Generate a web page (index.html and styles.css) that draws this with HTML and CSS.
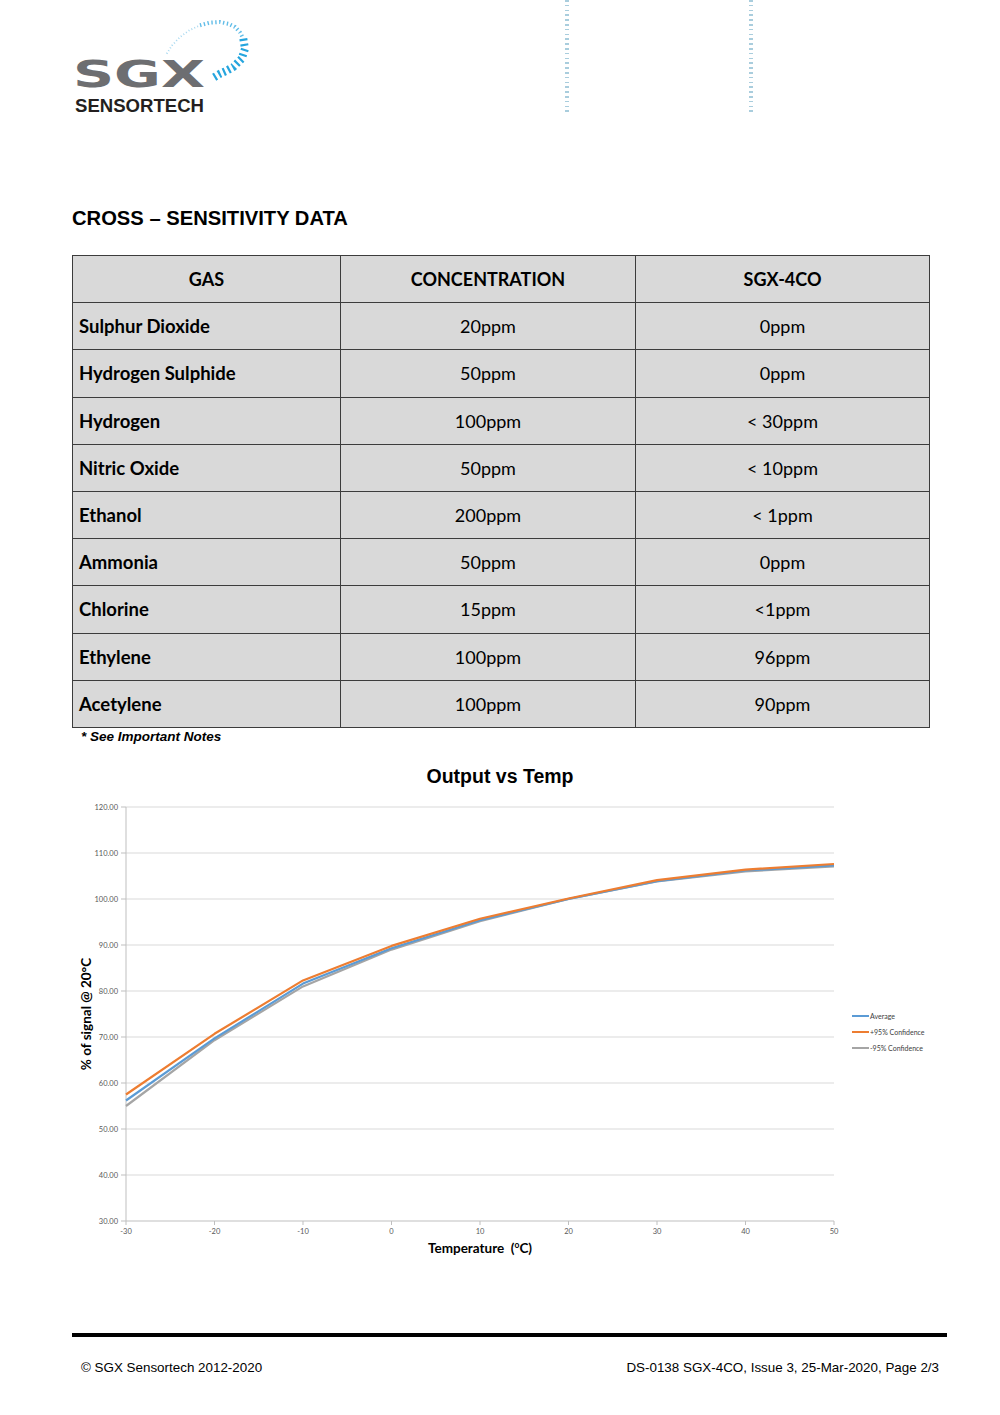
FILE: index.html
```html
<!DOCTYPE html>
<html lang="en">
<head>
<meta charset="utf-8">
<title>SGX-4CO Cross-Sensitivity Data</title>
<link rel="stylesheet" href="styles.css">
</head>
<body>
<div class="page">
  <header class="top">
    <div class="logo">
      <svg class="logo-svg" width="180" height="112" viewBox="72 0 180 112" aria-label="SGX Sensortech">
        <polyline class="arc arc-a" points="166.7,53.7 172,45.5 180,37 189.5,30.2 200,25.3"/>
        <polyline class="arc arc-b" points="200,25.3 210,22.6 220,22 228.5,23.8 235,27 240,32.3 243.3,38.7"/>
        <polyline class="arc arc-c" points="243.3,38.7 245,48.7 241.7,58.7 233.3,67 226,71 220,73.7 211.7,78.7"/>
        <text class="logo-sgx" x="73" y="87" textLength="132" lengthAdjust="spacingAndGlyphs">SGX</text>
        <text class="logo-sub" x="75" y="112" textLength="129" lengthAdjust="spacingAndGlyphs">SENSORTECH</text>
      </svg>
    </div>
    <div class="dots dots-1"></div>
    <div class="dots dots-2"></div>
  </header>

  <main class="content">
    <h1 class="section-title">CROSS – SENSITIVITY DATA</h1>

    <table class="xs-table">
      <colgroup>
        <col class="c1"><col class="c2"><col class="c3">
      </colgroup>
      <thead>
        <tr><th>GAS</th><th>CONCENTRATION</th><th>SGX-4CO</th></tr>
      </thead>
      <tbody>
        <tr><td class="gas">Sulphur Dioxide</td><td>20ppm</td><td>0ppm</td></tr>
        <tr><td class="gas">Hydrogen Sulphide</td><td>50ppm</td><td>0ppm</td></tr>
        <tr><td class="gas">Hydrogen</td><td>100ppm</td><td>&lt; 30ppm</td></tr>
        <tr><td class="gas">Nitric Oxide</td><td>50ppm</td><td>&lt; 10ppm</td></tr>
        <tr><td class="gas">Ethanol</td><td>200ppm</td><td>&lt; 1ppm</td></tr>
        <tr><td class="gas">Ammonia</td><td>50ppm</td><td>0ppm</td></tr>
        <tr><td class="gas">Chlorine</td><td>15ppm</td><td>&lt;1ppm</td></tr>
        <tr><td class="gas">Ethylene</td><td>100ppm</td><td>96ppm</td></tr>
        <tr><td class="gas">Acetylene</td><td>100ppm</td><td>90ppm</td></tr>
      </tbody>
    </table>
    <p class="note">* See Important Notes</p>

    <section class="chart">
      <h2 class="chart-title">Output vs Temp</h2>
      <svg class="chart-svg" width="880" height="470" viewBox="72 790 880 470">
        <g class="grid">
          <line x1="126" y1="806" x2="834" y2="806"/>
          <line x1="126" y1="852" x2="834" y2="852"/>
          <line x1="126" y1="898" x2="834" y2="898"/>
          <line x1="126" y1="944" x2="834" y2="944"/>
          <line x1="126" y1="990" x2="834" y2="990"/>
          <line x1="126" y1="1036" x2="834" y2="1036"/>
          <line x1="126" y1="1082" x2="834" y2="1082"/>
          <line x1="126" y1="1128" x2="834" y2="1128"/>
          <line x1="126" y1="1174" x2="834" y2="1174"/>
        </g>
        <g class="axis">
          <line x1="126" y1="806" x2="126" y2="1220"/>
          <line x1="121" y1="1220" x2="834" y2="1220"/>
          <line x1="121" y1="806" x2="126" y2="806"/>
          <line x1="121" y1="852" x2="126" y2="852"/>
          <line x1="121" y1="898" x2="126" y2="898"/>
          <line x1="121" y1="944" x2="126" y2="944"/>
          <line x1="121" y1="990" x2="126" y2="990"/>
          <line x1="121" y1="1036" x2="126" y2="1036"/>
          <line x1="121" y1="1082" x2="126" y2="1082"/>
          <line x1="121" y1="1128" x2="126" y2="1128"/>
          <line x1="121" y1="1174" x2="126" y2="1174"/>
          <line x1="126" y1="1220" x2="126" y2="1224"/>
          <line x1="214.5" y1="1220" x2="214.5" y2="1224"/>
          <line x1="303" y1="1220" x2="303" y2="1224"/>
          <line x1="391.5" y1="1220" x2="391.5" y2="1224"/>
          <line x1="480" y1="1220" x2="480" y2="1224"/>
          <line x1="568.5" y1="1220" x2="568.5" y2="1224"/>
          <line x1="657" y1="1220" x2="657" y2="1224"/>
          <line x1="745.5" y1="1220" x2="745.5" y2="1224"/>
          <line x1="834" y1="1220" x2="834" y2="1224"/>
        </g>
        <g class="ylab">
          <text x="118" y="808.5">120.00</text>
          <text x="118" y="854.5">110.00</text>
          <text x="118" y="900.5">100.00</text>
          <text x="118" y="946.5">90.00</text>
          <text x="118" y="992.5">80.00</text>
          <text x="118" y="1038.5">70.00</text>
          <text x="118" y="1084.5">60.00</text>
          <text x="118" y="1130.5">50.00</text>
          <text x="118" y="1176.5">40.00</text>
          <text x="118" y="1222.5">30.00</text>
        </g>
        <g class="xlab">
          <text x="126" y="1233">-30</text>
          <text x="214.5" y="1233">-20</text>
          <text x="303" y="1233">-10</text>
          <text x="391.5" y="1233">0</text>
          <text x="480" y="1233">10</text>
          <text x="568.5" y="1233">20</text>
          <text x="657" y="1233">30</text>
          <text x="745.5" y="1233">40</text>
          <text x="834" y="1233">50</text>
        </g>
        <polyline class="series s-low" points="126,1105 214.5,1039.2 303,985.4 391.5,948.6 480,920.1 568.5,898 657,880.5 745.5,870.4 834,865.3"/>
        <polyline class="series s-avg" points="126,1099.5 214.5,1037.4 303,982.6 391.5,947.2 480,919.2 568.5,898 657,880.1 745.5,869.5 834,864.4"/>
        <polyline class="series s-high" points="126,1093.5 214.5,1032.8 303,979.4 391.5,944.9 480,917.8 568.5,897.5 657,879.1 745.5,868.6 834,863"/>
        <text class="ytitle" transform="translate(90.5 1013) rotate(-90)">% of signal @ 20°C</text>
        <text class="xtitle" x="480" y="1251.5">Temperature&#160; (<tspan class="sup" dy="-4.5">o</tspan><tspan dy="4.5">C)</tspan></text>
        <g class="legend">
          <line class="s-avg" x1="852" y1="1015" x2="869" y2="1015"/>
          <line class="s-high" x1="852" y1="1031" x2="869" y2="1031"/>
          <line class="s-low" x1="852" y1="1047" x2="869" y2="1047"/>
          <text x="870" y="1017.5">Average</text>
          <text x="870" y="1033.5">+95% Confidence</text>
          <text x="870" y="1049.5">-95% Confidence</text>
        </g>
      </svg>
    </section>
  </main>

  <footer class="foot">
    <div class="foot-rule"></div>
    <div class="foot-text">
      <span>© SGX Sensortech 2012-2020</span>
      <span>DS-0138 SGX-4CO, Issue 3, 25-Mar-2020, Page 2/3</span>
    </div>
  </footer>
</div>
</body>
</html>
```

FILE: styles.css
```css
html, body {
  margin: 0;
  padding: 0;
  background: #ffffff;
}

body {
  font-family: "Liberation Sans", Arial, sans-serif;
  color: #000;
  width: 1000px;
  height: 1415px;
  overflow: hidden;
}

.page {
  width: 1000px;
}

/* ---------- header ---------- */
.top {
  display: flex;
  height: 112px;
  padding-left: 72px;
}

.logo-svg {
  display: block;
  overflow: visible;
}

.logo-sgx {
  font-family: "DejaVu Sans", sans-serif;
  font-weight: bold;
  font-size: 38px;
  fill: #6d6e71;
}

.logo-sub {
  font-family: "Liberation Sans", Arial, sans-serif;
  font-weight: bold;
  font-size: 19px;
  fill: #231f20;
}

.arc {
  fill: none;
}
.arc-a {
  stroke: #a9d9f0;
  stroke-width: 1.8;
  stroke-dasharray: 1 2.2;
}
.arc-b {
  stroke: #62bde8;
  stroke-width: 4;
  stroke-dasharray: 1.4 2.5;
}
.arc-c {
  stroke: #25a5de;
  stroke-width: 8;
  stroke-dasharray: 2.2 3;
}

.dots {
  width: 4px;
  height: 112px;
  background: repeating-linear-gradient(to bottom, #a9cddd 0, #a9cddd 1.6px, transparent 1.6px, transparent 4.8px);
}
.dots-1 {
  margin-left: 313px;
}
.dots-2 {
  margin-left: 180px;
}

/* ---------- content ---------- */
.content {
  padding: 0 71px 0 72px;
}

.section-title {
  margin: 95px 0 0 0;
  font-size: 20.2px;
  line-height: 22px;
  font-weight: bold;
}

.xs-table {
  margin-top: 26px;
  width: 857px;
  border-collapse: collapse;
  table-layout: fixed;
  background: #d9d9d9;
  font-family: Lato, "Open Sans", sans-serif;
  font-size: 18px;
  color: #000;
}

.c1 { width: 268px; }
.c2 { width: 295px; }
.c3 { width: 294px; }

.xs-table th,
.xs-table td {
  border: 1px solid #3c3c3c;
  height: 46.2px;
  padding: 0 6px;
  text-align: center;
  vertical-align: middle;
}

.xs-table th {
  font-weight: bold;
}

.xs-table td.gas {
  text-align: left;
  font-weight: bold;
  font-size: 18.5px;
}

.note {
  margin: 1px 0 0 9px;
  font-size: 13.5px;
  line-height: 16px;
  font-weight: bold;
  font-style: italic;
}

/* ---------- chart ---------- */
.chart {
  margin-top: 20px;
}

.chart-title {
  margin: 0;
  text-align: center;
  font-size: 19.5px;
  line-height: 23px;
  font-weight: bold;
  padding-right: 1px;
}

.chart-svg {
  display: block;
  margin-top: 3px;
}

.grid line {
  stroke: #d9d9d9;
  stroke-width: 1;
}

.axis line {
  stroke: #bfbfbf;
  stroke-width: 1;
}

.ylab text,
.xlab text {
  font-family: Lato, "Open Sans", sans-serif;
  font-size: 7.5px;
  fill: #595959;
}
.ylab text {
  text-anchor: end;
}
.xlab text {
  text-anchor: middle;
}

.series {
  fill: none;
  stroke-width: 2.2;
  stroke-linejoin: round;
}
.s-avg { stroke: #5b9bd5; }
.s-high { stroke: #ed7d31; }
.s-low { stroke: #a5a5a5; }

.legend line {
  stroke-width: 2;
}
.legend text {
  font-family: Lato, "Open Sans", sans-serif;
  font-size: 7px;
  fill: #404040;
}

.ytitle,
.xtitle {
  font-family: Lato, "Open Sans", sans-serif;
  font-weight: bold;
  font-size: 13.5px;
  fill: #000;
  text-anchor: middle;
}
.sup {
  font-size: 8.5px;
}

/* ---------- footer ---------- */
.foot {
  margin-top: 72px;
  padding: 0 53px 0 72px;
}

.foot-rule {
  height: 4px;
  background: #000;
}

.foot-text {
  display: flex;
  justify-content: space-between;
  margin-top: 23px;
  padding: 0 8px 0 9px;
  font-size: 13.4px;
  line-height: 16px;
}
```
